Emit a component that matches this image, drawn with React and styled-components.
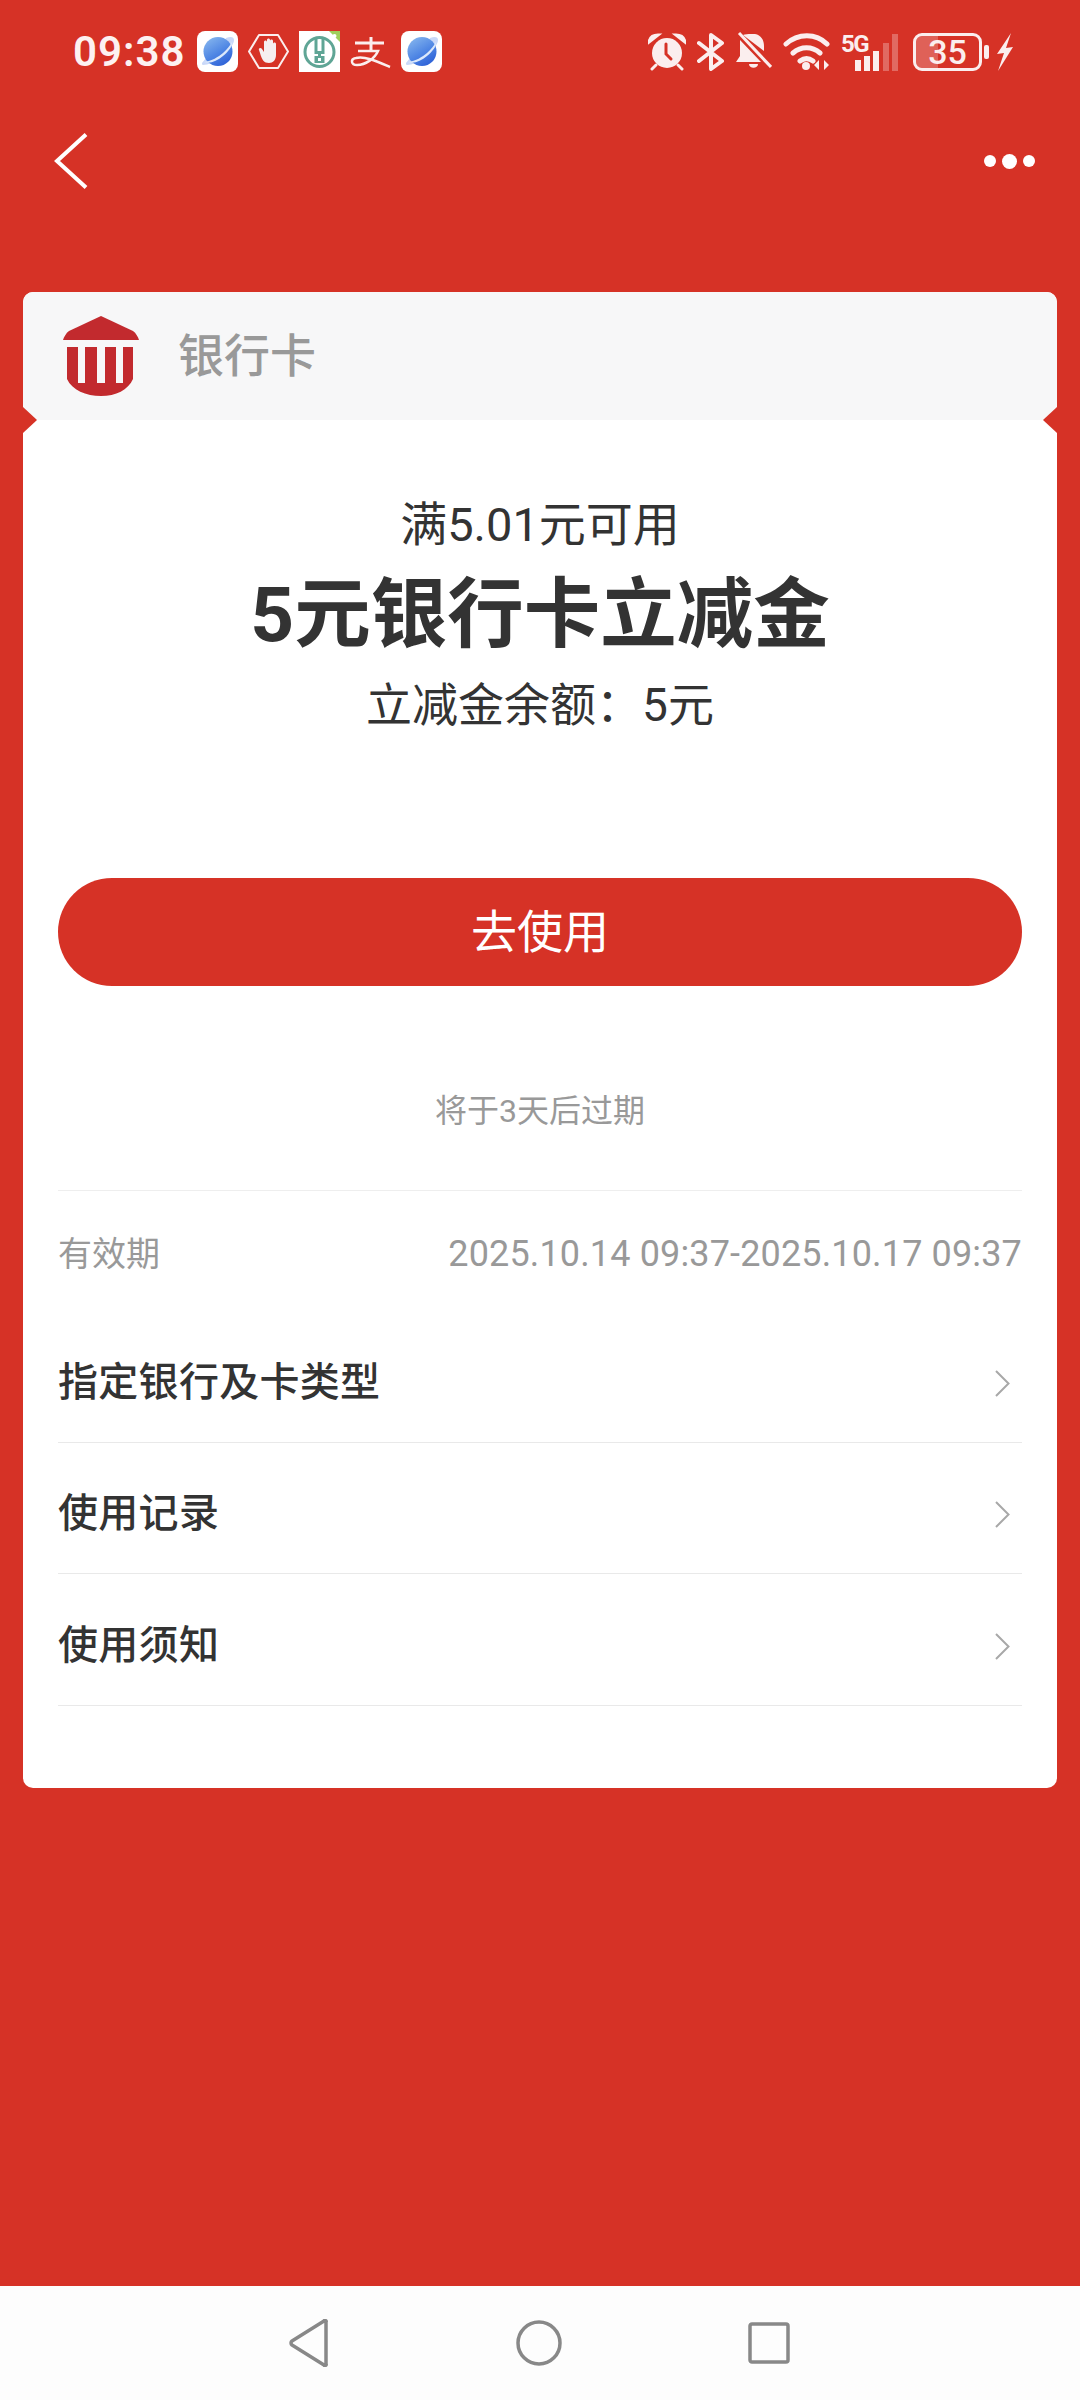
import React from 'react';
import styled, { createGlobalStyle } from 'styled-components';

const GlobalStyle = createGlobalStyle`
  html, body {
    margin: 0;
    padding: 0;
    background: #d63226;
  }
  * {
    box-sizing: border-box;
  }
`;

const Planet = ({ id }) => (
  <svg width="41" height="41" viewBox="0 0 41 41">
    <defs>
      <linearGradient id={id} x1="0.15" y1="0" x2="0.75" y2="1">
        <stop offset="0" stopColor="#86b6ee" />
        <stop offset="0.55" stopColor="#4f86e4" />
        <stop offset="1" stopColor="#2c5fd6" />
      </linearGradient>
    </defs>
    <rect width="41" height="41" rx="8" fill="#fff" />
    <path d="M29 7c5-2 8-1 8 2 0 4-5 11-12 17-7 5-14 8-19 8-1 0-1-1-1-2l4-5 14-9z" fill="#c9d8f8" />
    <circle cx="21" cy="20.500" r="14.500" fill={`url(#${id})`} />
    <path d="M7 31c8-1 14-5 19-9 4-4 7-7 9-11 1 4-4 10-9 14-6 5-13 8-19 6z" fill="#dbe8fb" />
  </svg>
);

const HandBadge = () => (
  <svg width="41" height="41" viewBox="0 0 41 41">
    <path d="M11 4h19l10 16.500L30 37H11L1 20.500z" fill="none" stroke="#fbeeee" strokeWidth="2" strokeLinejoin="round" />
    <path d="M12 22l-1-3c-1-2 2-3 3-1l2 3V11c0-2 3-2 3 0v6V9c0-2 3-2 3 0v8-7c0-2 3-2 3 0v8-5c0-2 3-2 3 0v11c0 5-3 8-7 8-5 0-7-3-9-10z" fill="#f6eef0" />
  </svg>
);

const BankBadge = () => (
  <svg width="41" height="41" viewBox="0 0 41 41">
    <rect width="41" height="41" fill="#fff" />
    <circle cx="20.500" cy="21" r="14.500" fill="none" stroke="#5fa595" strokeWidth="3" />
    <path d="M15.500 6h3v14h4V6h3v17h-3.500v2h3.500v7h-10v-7h3.500v-2h-3.500zM19 27v3h3v-3z" fill="#5fa595" />
    <path d="M30 0h11v11z" fill="#9fce5a" />
    <circle cx="35.500" cy="5" r="2" fill="#fff" />
  </svg>
);

const AlipayMark = () => (
  <svg width="41" height="41" viewBox="0 0 41 41">
    <path d="M5 12h29M21 6v15" fill="none" stroke="#fbeeee" strokeWidth="3" />
    <path d="M8 20h20c-3 7-12 14-21 14-6 0-7-6-1-7 9-2 20 3 34 9" fill="none" stroke="#fbeeee" strokeWidth="2.500" />
  </svg>
);

const AlarmIcon = () => (
  <svg width="38" height="38" viewBox="0 0 38 38">
    <circle cx="19" cy="20" r="15" fill="#fbeeee" />
    <path d="M1 9c1-5 5-7 9-7zM37 9c-1-5-5-7-9-7zM8 32l-4 4M30 32l4 4" fill="#fbeeee" stroke="#fbeeee" strokeWidth="3" strokeLinecap="round" />
    <path d="M18 11v10l5 5" fill="none" stroke="#d63226" strokeWidth="3" strokeLinecap="round" />
  </svg>
);

const BluetoothIcon = () => (
  <svg width="28" height="38" viewBox="0 0 28 38">
    <path d="M2 10l23 18-11 8V2l11 8L2 28" fill="none" stroke="#fbeeee" strokeWidth="4" strokeLinecap="round" strokeLinejoin="round" />
  </svg>
);

const MutedBellIcon = () => (
  <svg width="36" height="40" viewBox="0 0 36 40">
    <path d="M15 2h4c6 1 9 6 9 12v5L7 3c2-1 5-1 8-1zM4 8l21 22H0l4-6zM13 32h9c0 5-9 5-9 0z" fill="#fbeeee" />
    <path d="M3 1l32 34" stroke="#fbeeee" strokeWidth="3" />
  </svg>
);

const WifiIcon = () => (
  <svg width="47" height="38" viewBox="0 0 47 38">
    <path d="M3 11c12-11 30-11 41 0M10 20c8-7 19-7 27 0M17 28c4-3 9-3 13 0" fill="none" stroke="#fbeeee" strokeWidth="5" strokeLinecap="round" />
    <circle cx="23" cy="33" r="4" fill="#fbeeee" />
    <path d="M36 27v10l-5-5zM41 27v10l5-5z" fill="#fbeeee" />
  </svg>
);

const SignalIcon = () => (
  <svg width="44" height="38" viewBox="0 0 44 38">
    <rect x="1" y="27" width="6" height="11" fill="#fbeeee" />
    <rect x="10" y="23" width="6" height="15" fill="#fbeeee" />
    <rect x="19" y="18" width="6" height="20" fill="#fbeeee" />
    <rect x="29" y="10" width="6" height="28" fill="#fbeeee" opacity="0.3" />
    <rect x="38" y="1" width="6" height="37" fill="#fbeeee" opacity="0.3" />
  </svg>
);

const BackIcon = () => (
  <svg width="34" height="56" viewBox="0 0 34 56">
    <path d="M32 1.500L3 28l29 26.500" fill="none" stroke="#fff" strokeWidth="4" />
  </svg>
);

const BankLogo = () => (
  <svg width="76" height="80" viewBox="0 0 76 80">
    <path d="M38 0l32 15c3 2 5 6 6 9H0c1-3 3-7 6-9z" fill="#c22a2e" />
    <path d="M4 31h11v36h7V31h12v36h8V31h11v36h7V31h10v32c-5 11-17 17-32 17S9 74 4 63z" fill="#c22a2e" />
  </svg>
);

const rows = ['指定银行及卡类型', '使用记录', '使用须知'];

const App = () => {
  return (
    <Page>
      <GlobalStyle />
      <StatusBar>
        <LeftStatus>
          <Clock>09:38</Clock>
          <Planet id="planet-a" />
          <HandBadge />
          <BankBadge />
          <AlipayMark />
          <Planet id="planet-b" />
        </LeftStatus>
        <RightStatus>
          <AlarmIcon />
          <BluetoothIcon />
          <MutedBellIcon />
          <WifiIcon />
          <NetworkGroup>
            <FiveG>5G</FiveG>
            <SignalIcon />
          </NetworkGroup>
          <BatteryGroup>
            <Battery>
              <BatteryLevel />
              <BatteryText>35</BatteryText>
            </Battery>
            <BatteryNub />
          </BatteryGroup>
          <BoltSvg width="17" height="38" viewBox="0 0 17 38">
            <path d="M15 0L1 21l7-1-6 18 15-24-7 1z" fill="#fbeeee" />
          </BoltSvg>
        </RightStatus>
      </StatusBar>

      <TopNav>
        <BackIcon />
        <MoreDots>
          <Dot />
          <Dot $big />
          <Dot />
        </MoreDots>
      </TopNav>

      <Card>
        <CardHeader>
          <BankLogo />
          <HeaderTitle>银行卡</HeaderTitle>
          <Notch />
          <Notch $right />
        </CardHeader>
        <CardBody>
          <Condition>满5.01元可用</Condition>
          <Amount>5元银行卡立减金</Amount>
          <Balance>立减金余额：5元</Balance>
          <UseButton>去使用</UseButton>
          <Expire>将于3天后过期</Expire>
          <ValidRow>
            <ValidLabel>有效期</ValidLabel>
            <ValidValue>2025.10.14 09:37-2025.10.17 09:37</ValidValue>
          </ValidRow>
          {rows.map((row) => (
            <LinkRow key={row}>
              <span>{row}</span>
              <ChevronSvg width="15" height="27" viewBox="0 0 15 27">
                <path d="M1 1l12.500 12.500L1 26" fill="none" stroke="#a8a8a8" strokeWidth="2" />
              </ChevronSvg>
            </LinkRow>
          ))}
        </CardBody>
      </Card>

      <BottomNav>
        <svg width="42" height="48" viewBox="0 0 42 48">
          <path d="M38 3v42a1 1 0 0 1-2 1L4 26a2.500 2.500 0 0 1 0-4L36 2a1 1 0 0 1 2 1z" fill="none" stroke="#888" strokeWidth="3.500" strokeLinejoin="round" />
        </svg>
        <svg width="46" height="46" viewBox="0 0 46 46">
          <circle cx="23" cy="23" r="21" fill="none" stroke="#888" strokeWidth="3.500" />
        </svg>
        <svg width="42" height="42" viewBox="0 0 42 42">
          <rect x="2" y="2" width="38" height="38" rx="2" fill="none" stroke="#888" strokeWidth="3.500" />
        </svg>
      </BottomNav>
    </Page>
  );
};

export default App;

const Page = styled.div`
  width: 1080px;
  height: 2400px;
  display: flex;
  flex-direction: column;
  background: #d63226;
  font-family: 'Roboto', 'Noto Sans CJK SC', sans-serif;
  overflow: hidden;
`;

const StatusBar = styled.div`
  display: flex;
  justify-content: space-between;
  align-items: center;
  height: 41px;
  margin-top: 31px;
  padding: 0 67px 0 73px;
`;

const LeftStatus = styled.div`
  display: flex;
  align-items: center;
  gap: 10px;
`;

const Clock = styled.span`
  width: 114px;
  color: #fdf1f1;
  font-size: 42px;
  font-weight: 600;
  letter-spacing: 1px;
  line-height: 41px;
`;

const RightStatus = styled.div`
  display: flex;
  align-items: center;
  gap: 11px;
`;

const NetworkGroup = styled.div`
  display: flex;
  align-items: flex-end;
  position: relative;
  width: 57px;
  height: 38px;
  justify-content: flex-end;
`;

const FiveG = styled.span`
  position: absolute;
  left: 0;
  top: -1px;
  color: #fbeeee;
  font-size: 24px;
  font-weight: 700;
  line-height: 24px;
  letter-spacing: -1.5px;
`;

const BatteryGroup = styled.div`
  display: flex;
  align-items: center;
  gap: 2px;
  margin-left: 4px;
`;

const Battery = styled.div`
  position: relative;
  width: 69px;
  height: 38px;
  border: 3px solid #fbeeee;
  border-radius: 9px;
  display: flex;
  align-items: center;
  justify-content: center;
  overflow: hidden;
`;

const BatteryLevel = styled.div`
  position: absolute;
  left: 0;
  top: 0;
  bottom: 0;
  width: 35%;
  background: rgba(251, 238, 238, 0.25);
`;

const BatteryText = styled.span`
  position: relative;
  color: #fbeeee;
  font-size: 34px;
  font-weight: 500;
  line-height: 32px;
`;

const BatteryNub = styled.div`
  width: 5px;
  height: 14px;
  border-radius: 2px;
  background: #fbeeee;
`;

const BoltSvg = styled.svg`
  margin-left: -4px;
`;

const TopNav = styled.div`
  display: flex;
  justify-content: space-between;
  align-items: center;
  height: 100px;
  margin-top: 39px;
  padding: 0 45px 0 54px;
`;

const MoreDots = styled.div`
  display: flex;
  align-items: center;
  gap: 6px;
`;

const Dot = styled.div`
  width: ${(props) => (props.$big ? '15px' : '12px')};
  height: ${(props) => (props.$big ? '15px' : '12px')};
  border-radius: 50%;
  background: #fff;
`;

const Card = styled.div`
  margin: 81px 23px 0;
  height: 1496px;
  border-radius: 10px;
  background: #fff;
  overflow: hidden;
`;

const CardHeader = styled.div`
  position: relative;
  display: flex;
  align-items: center;
  gap: 39px;
  height: 128px;
  padding: 0 0 0 40px;
  background: #f7f7f8;
`;

const HeaderTitle = styled.span`
  color: #999;
  font-size: 46px;
  font-weight: 500;
  line-height: 60px;
`;

const Notch = styled.div`
  position: absolute;
  bottom: -13px;
  ${(props) => (props.$right ? 'right: 0;' : 'left: 0;')}
  width: 14px;
  height: 26px;
  background: #d63226;
  clip-path: ${(props) =>
    props.$right
      ? 'polygon(100% 0, 0 50%, 100% 100%)'
      : 'polygon(0 0, 100% 50%, 0 100%)'};
  z-index: 1;
`;

const CardBody = styled.div`
  display: flex;
  flex-direction: column;
  padding: 80px 35px 0;
  color: #333;
  text-align: center;
`;

const Condition = styled.div`
  font-size: 47px;
  line-height: 50px;
`;

const Amount = styled.div`
  margin-top: 20px;
  font-size: 76.5px;
  font-weight: 700;
  line-height: 90px;
`;

const Balance = styled.div`
  margin-top: 20px;
  font-size: 46px;
  line-height: 50px;
`;

const UseButton = styled.button`
  all: unset;
  margin-top: 148px;
  height: 108px;
  border-radius: 54px;
  background: #d63226;
  color: #fff;
  font-size: 46px;
  line-height: 106px;
  text-align: center;
`;

const Expire = styled.div`
  margin-top: 105px;
  color: #999;
  font-size: 32px;
  line-height: 40px;
`;

const ValidRow = styled.div`
  display: flex;
  justify-content: space-between;
  align-items: center;
  height: 121px;
  margin-top: 59px;
  padding-top: 6px;
  border-top: 1px solid #eee;
  color: #999;
`;

const ValidLabel = styled.span`
  font-size: 34px;
  line-height: 40px;
`;

const ValidValue = styled.span`
  font-size: 36px;
  letter-spacing: 0.15px;
  line-height: 40px;
`;

const LinkRow = styled.div`
  display: flex;
  justify-content: space-between;
  align-items: center;
  height: 131.5px;
  padding: 5px 12px 0 0;
  border-bottom: 1px solid #e9e9e9;
  color: #333;
  font-size: 40px;
  font-weight: 500;
  letter-spacing: 0.3px;
`;

const ChevronSvg = styled.svg`
  margin-top: 9px;
`;

const BottomNav = styled.div`
  margin-top: auto;
  height: 114px;
  display: flex;
  align-items: center;
  justify-content: space-between;
  padding: 0 290px 0 288px;
  background: #fdfdfd;
`;
